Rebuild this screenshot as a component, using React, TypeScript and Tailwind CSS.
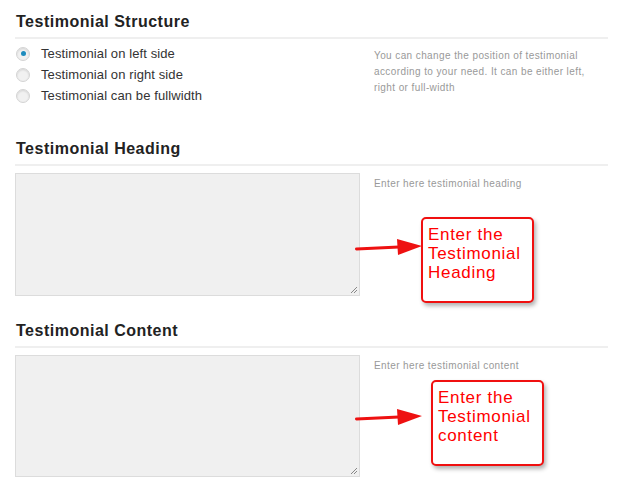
import React from "react";

const Radio = ({ checked, label }: { checked?: boolean; label: string }) => (
    <label className="flex items-center h-[21px]">
        <span className="w-[14px] h-[14px] ml-[1px] rounded-full border border-[#d4d4d4] bg-[#f1f1f1] shadow-[inset_0_1px_2px_rgba(0,0,0,0.12)] flex items-center justify-center">
            {checked && <span className="w-[5px] h-[5px] rounded-full bg-[#1e8cbe]"></span>}
        </span>
        <span className="ml-[11px] text-[13px] tracking-[0.1px] text-[#333]">{label}</span>
    </label>
);

const Heading = ({ title }: { title: string }) => (
    <div>
        <h2 className="text-[16px] tracking-[0.5px] font-bold text-[#222] leading-[20px] pl-[1px]">{title}</h2>
        <div className="mt-[5px] h-[2px] bg-[#efefef]"></div>
    </div>
);

const Resizer = () => (
    <svg className="absolute right-[1px] bottom-[1px]" width="8" height="8" viewBox="0 0 8 8">
        <path d="M7 1 L1 7 M7 4 L4 7" stroke="#888" strokeWidth="1" />
    </svg>
);

const Callout = ({ lines, className }: { lines: string[]; className: string }) => (
    <div className={"absolute w-[113px] h-[86px] rounded-[5px] border-2 border-[#f01010] bg-white shadow-[2px_3px_4px_rgba(0,0,0,0.3)] pl-[5px] pt-[6px] " + className}>
        {lines.map((l) => (
            <div key={l} className="text-[17px] tracking-[0.7px] leading-[19px] text-[#ff0000]">{l}</div>
        ))}
    </div>
);

const Arrow = ({ className }: { className: string }) => (
    <svg className={"absolute " + className} width="68" height="18" viewBox="0 0 68 18">
        <path d="M1.5 11 L44 9" stroke="#ee1111" strokeWidth="3" strokeLinecap="round" />
        <path d="M42 1 L67 8 L43 17 Z" fill="#ee1111" />
    </svg>
);

const App = () => {
    return (
        <div className="relative w-[623px] h-[492px] bg-white overflow-hidden" style={{ fontFamily: '"Liberation Sans", Arial, sans-serif' }}>
            <div className="pl-[15px] w-[608px] pt-[12px]">
                <Heading title="Testimonial Structure" />
                <div className="flex mt-[4px]">
                    <div className="w-[359px] flex flex-col">
                        <Radio checked label="Testimonial on left side" />
                        <Radio label="Testimonial on right side" />
                        <Radio label="Testimonial can be fullwidth" />
                    </div>
                    <p className="text-[10px] tracking-[0.4px] leading-[16px] text-[#999] w-[218px] pt-[5px]">
                        You can change the position of testimonial according to your need. It can be either left, right or full-width
                    </p>
                </div>

                <div className="mt-[33px]">
                    <Heading title="Testimonial Heading" />
                    <div className="flex mt-[7px]">
                        <div className="relative w-[345px] h-[123px] bg-[#f0f0f0] border border-[#dcdcdc]">
                            <Resizer />
                        </div>
                        <p className="ml-[14px] pt-[3px] text-[10px] tracking-[0.4px] text-[#999]">Enter here testimonial heading</p>
                    </div>
                </div>

                <div className="mt-[25px]">
                    <Heading title="Testimonial Content" />
                    <div className="flex mt-[7px]">
                        <div className="relative w-[345px] h-[122px] bg-[#f0f0f0] border border-[#dcdcdc]">
                            <Resizer />
                        </div>
                        <p className="ml-[14px] pt-[3px] text-[10px] tracking-[0.4px] text-[#999]">Enter here testimonial content</p>
                    </div>
                </div>
            </div>

            <Arrow className="left-[355px] top-[238px]" />
            <Callout className="left-[421px] top-[217px]" lines={["Enter the", "Testimonial", "Heading"]} />
            <Arrow className="left-[355px] top-[408px]" />
            <Callout className="left-[431px] top-[380px]" lines={["Enter the", "Testimonial", "content"]} />
        </div>
    );
};

export default App;
